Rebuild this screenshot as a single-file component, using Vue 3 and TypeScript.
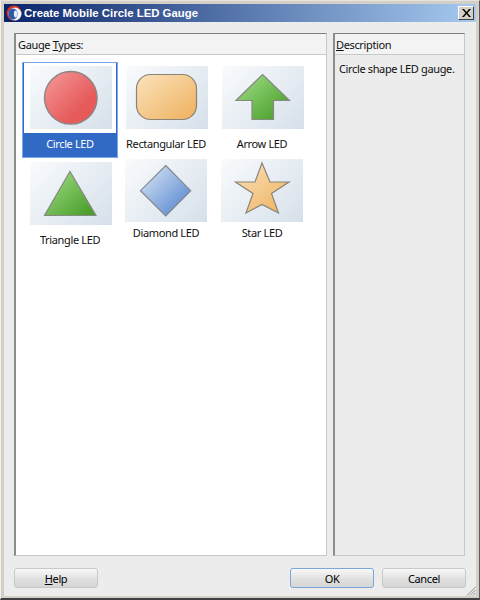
<template>
  <div class="dialog">
    <div class="title-bar">
      <svg class="app-icon" width="16" height="16" viewBox="0 0 16 16">
        <circle cx="8" cy="8" r="7.500" fill="#d8301f" />
        <ellipse cx="9" cy="9" rx="6.500" ry="6.500" fill="#f2f4f8" />
        <ellipse cx="7" cy="9" rx="4.500" ry="5.500" fill="#2a5aa8" />
        <ellipse cx="9.500" cy="9" rx="1.600" ry="3.400" fill="#e8eef8" />
      </svg>
      <span class="title-text">Create Mobile Circle LED Gauge</span>
      <button class="close-btn" aria-label="Close">
        <svg width="9" height="8" viewBox="0 0 9 8">
          <path d="M0 0h2l2.500 3L7 0h2L5.500 4 9 8H7L4.500 5 2 8H0l3.500-4z" fill="#000" />
        </svg>
      </button>
    </div>

    <div class="body">
      <div class="panels">
        <section class="panel types">
          <header class="panel-head"><span>Gauge <u>T</u>ypes:</span></header>
          <div class="gauge-grid">
            <div
              v-for="g in gauges"
              :key="g.name"
              class="gauge"
              :class="{ selected: g.selected, short: g.short }"
            >
              <div class="thumb">
                <svg width="82" height="63" viewBox="0 0 82 63">
                  <defs>
                    <linearGradient id="red" x1="0" y1="0" x2="1" y2="1">
                      <stop offset="0" stop-color="#f59a9a" />
                      <stop offset="0.7" stop-color="#e65a5a" />
                    </linearGradient>
                    <linearGradient id="orange" x1="0" y1="0" x2="1" y2="1">
                      <stop offset="0" stop-color="#fbe3bd" />
                      <stop offset="1" stop-color="#eeb05c" />
                    </linearGradient>
                    <linearGradient id="green" x1="0" y1="0" x2="1" y2="1">
                      <stop offset="0.1" stop-color="#98d97f" />
                      <stop offset="0.9" stop-color="#4c9f2c" />
                    </linearGradient>
                    <linearGradient id="blue" x1="0" y1="0" x2="1" y2="1">
                      <stop offset="0.1" stop-color="#d1dff1" />
                      <stop offset="0.85" stop-color="#5f8ed3" />
                    </linearGradient>
                  </defs>
                  <circle v-if="g.shape === 'circle'" cx="40.800" cy="31.800" r="26.300" fill="url(#red)" stroke="#8d8585" stroke-width="1.400" />
                  <rect v-else-if="g.shape === 'rect'" x="10.500" y="8.500" width="60" height="45" rx="14" fill="url(#orange)" stroke="#8a8478" stroke-width="1.200" />
                  <path v-else-if="g.shape === 'arrow'" d="M40.500 8.500 67.500 34.500H51.500V53.500H30V34.500H14Z" fill="url(#green)" stroke="#85897f" stroke-width="1.200" />
                  <path v-else-if="g.shape === 'triangle'" d="M40 9.500 66 53.500H14.500Z" fill="url(#green)" stroke="#85897f" stroke-width="1.200" />
                  <path v-else-if="g.shape === 'diamond'" d="M40.700 6.500 65.700 31.700 40.700 57 15.500 31.700Z" fill="url(#blue)" stroke="#84888f" stroke-width="1.200" />
                  <path v-else d="M41 4 49 23 68 23 50.500 34.500 57.500 54 41 45.500 25 54 32 34.500 14.500 23 34 23Z" fill="url(#orange)" stroke="#8a8478" stroke-width="1.200" />
                </svg>
              </div>
              <div class="label">{{ g.name }}</div>
            </div>
          </div>
        </section>

        <section class="panel desc">
          <header class="panel-head"><span><u>D</u>escription</span></header>
          <p class="desc-text">Circle shape LED gauge.</p>
        </section>
      </div>

      <footer class="buttons">
        <button class="btn"><u>H</u>elp</button>
        <div class="right-btns">
          <button class="btn default">OK</button>
          <button class="btn">Cancel</button>
        </div>
      </footer>
    </div>

    <svg class="grip" width="10" height="10" viewBox="0 0 10 10">
      <path d="M9.500 1 1 9.500M9.500 4 4 9.500M9.500 7 7 9.500" stroke="#8f8f8f" stroke-width="1" fill="none" />
    </svg>
  </div>
</template>

<script setup lang="ts">
interface Gauge {
  name: string
  shape: string
  selected?: boolean
  short?: boolean
}

const gauges: Gauge[] = [
  { name: 'Circle LED', shape: 'circle', selected: true },
  { name: 'Rectangular LED', shape: 'rect' },
  { name: 'Arrow LED', shape: 'arrow' },
  { name: 'Triangle LED', shape: 'triangle' },
  { name: 'Diamond LED', shape: 'diamond', short: true },
  { name: 'Star LED', shape: 'star', short: true }
]
</script>

<style>
html,
body {
  margin: 0;
  background: #d4d0c8;
}
</style>

<style scoped>
.dialog {
  position: relative;
  width: 480px;
  height: 600px;
  box-sizing: border-box;
  background: #d4d0c8;
  border-top: 1px solid #e6e3dc;
  border-left: 1px solid #f4f2ee;
  border-right: 1px solid #5c5c5c;
  border-bottom: 2px solid #404040;
  padding: 3px 3px 2px 3px;
  display: flex;
  flex-direction: column;
  font-family: "Noto Sans", "Liberation Sans", sans-serif;
  font-size: 11px;
  letter-spacing: -0.36px;
  color: #000;
}

.title-bar {
  height: 18px;
  flex: none;
  display: flex;
  align-items: center;
  padding: 0 2px;
  background: linear-gradient(to right, #0a246a, #a6caf0);
}

.app-icon {
  flex: none;
  margin-right: 2px;
}

.title-text {
  flex: 1;
  color: #fff;
  font-weight: 700;
  font-size: 11.4px;
  letter-spacing: 0;
  font-family: "Liberation Sans", sans-serif;
}

.close-btn {
  width: 16px;
  height: 14px;
  padding: 0;
  display: flex;
  align-items: center;
  justify-content: center;
  background: #d4d0c8;
  border: 1px solid;
  border-color: #fff #404040 #404040 #fff;
}

.body {
  flex: 1;
  display: flex;
  flex-direction: column;
  background: #ececec;
  padding: 11px 10px 8px 10px;
  min-height: 0;
}

.panels {
  flex: 1;
  display: flex;
  gap: 6px;
  min-height: 0;
}

.panel {
  box-sizing: border-box;
  display: flex;
  flex-direction: column;
  border-style: solid;
  border-width: 1px 1px 1px 2px;
  border-color: #808080 #c8c8c8 #c8c8c8 #8c8c8c;
}

.types {
  width: 313px;
  background: #fff;
}

.desc {
  width: 132px;
  background: #ececec;
}

.panel-head {
  height: 21px;
  flex: none;
  box-sizing: border-box;
  padding: 3px 3px 0 2px;
  background: #f3f3f3;
  border-bottom: 1px solid #c8c8c8;
  line-height: 15px;
  color: #101010;
}

.desc .panel-head {
  padding-left: 1px;
}

.gauge-grid {
  display: grid;
  grid-template-columns: repeat(3, 96px);
  grid-auto-rows: 96px;
  padding: 7px 0 0 6px;
}

.gauge {
  box-sizing: border-box;
  padding: 4px 0 0 8px;
  display: flex;
  flex-direction: column;
  align-items: flex-start;
}

.gauge.short {
  padding: 1px 0 0 7px;
}

.gauge.selected {
  background: #316ac5;
  border: 1px solid #7aa7ee;
  padding: 0 1px;
}

.thumb {
  width: 82px;
  height: 63px;
  flex: none;
  background: linear-gradient(135deg, #f9fbfd, #d6e0ea);
}

.gauge.selected .thumb {
  border: solid #fff;
  border-width: 3px 4px 4px 6px;
  background-clip: padding-box;
  background-origin: padding-box;
}

.label {
  align-self: stretch;
  margin: 7px 0 0 -8px;
  line-height: 16px;
  text-align: center;
  white-space: nowrap;
  color: #101010;
}

.gauge.short .label {
  margin: 3px 0 0 -7px;
}

.gauge.selected .label {
  margin: 3px 0 0 0;
  color: #fff;
}

.desc-text {
  margin: 6px 0 0 4px;
  line-height: 15px;
  color: #101010;
}

.buttons {
  flex: none;
  margin-top: 12px;
  display: flex;
  justify-content: space-between;
}

.right-btns {
  display: flex;
  gap: 8px;
}

.btn {
  width: 84px;
  height: 20px;
  padding: 0;
  font: inherit;
  letter-spacing: inherit;
  color: #000;
  background: linear-gradient(to bottom, #f8f8f8, #f0f0f0 20%, #e0e0e0 55%, #d6d6d6);
  border: 1px solid #c8c8c8;
  border-radius: 3px;
}

.btn.default {
  border-color: #7aa7d8;
}

.grip {
  position: absolute;
  right: 3px;
  bottom: 2px;
}
</style>
